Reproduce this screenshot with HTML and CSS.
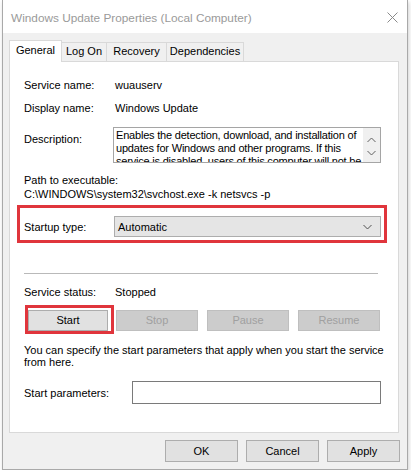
FILE: index.html
```html
<!DOCTYPE html>
<html>
<head>
<meta charset="utf-8">
<link rel="stylesheet" href="styles.css">
</head>
<body>
<div class="window">
  <div class="titlebar">
    <span class="title">Windows Update Properties (Local Computer)</span>
    <svg class="close" width="11" height="11" viewBox="0 0 11 11"><path d="M0.5 0.5 L10.5 10.5 M10.5 0.5 L0.5 10.5" stroke="#8a8a8a" stroke-width="1" fill="none"/></svg>
  </div>
  <div class="client">
    <div class="tabs">
      <div class="tab active t-general">General</div>
      <div class="tab t-logon">Log On</div>
      <div class="tab t-recovery">Recovery</div>
      <div class="tab t-deps">Dependencies</div>
    </div>
    <div class="panel">
      <div class="row first"><span class="label">Service name:</span><span class="value">wuauserv</span></div>
      <div class="row second"><span class="label">Display name:</span><span class="value">Windows Update</span></div>
      <div class="desc-row">
        <span class="label desc-label">Description:</span>
        <div class="desc-box">
          <div class="desc-text">Enables the detection, download, and installation of updates for Windows and other programs. If this service is disabled, users of this computer will not be able to use Windows Update or its automatic updating feature.</div>
          <div class="scroll">
            <svg width="9" height="6" viewBox="0 0 9 6"><path d="M0.5 5 L4.5 1 L8.5 5" stroke="#606060" fill="none"/></svg>
            <svg width="9" height="6" viewBox="0 0 9 6"><path d="M0.5 1 L4.5 5 L8.5 1" stroke="#606060" fill="none"/></svg>
          </div>
        </div>
      </div>
      <div class="line path-label">Path to executable:</div>
      <div class="line">C:\WINDOWS\system32\svchost.exe -k netsvcs -p</div>
      <div class="highlight startup">
        <span class="label startup-label">Startup type:</span>
        <div class="combo"><span>Automatic</span>
          <svg width="9" height="6" viewBox="0 0 9 6"><path d="M0.5 1 L4.5 5 L8.5 1" stroke="#505050" fill="none"/></svg>
        </div>
      </div>
      <div class="separator"></div>
      <div class="row status"><span class="label">Service status:</span><span class="value">Stopped</span></div>
      <div class="svc-buttons">
        <div class="highlight start-wrap"><div class="btn start">Start</div></div>
        <div class="btn disabled">Stop</div>
        <div class="btn disabled">Pause</div>
        <div class="btn disabled">Resume</div>
      </div>
      <p class="hint">You can specify the start parameters that apply when you start the service from here.</p>
      <div class="params">
        <span class="label params-label">Start parameters:</span>
        <div class="input"></div>
      </div>
    </div>
    <div class="dialog-buttons">
      <div class="btn dlg">OK</div>
      <div class="btn dlg">Cancel</div>
      <div class="btn dlg">Apply</div>
    </div>
  </div>
</div>
</body>
</html>
```
FILE: styles.css
```css
* { box-sizing: border-box; }
html, body { margin: 0; padding: 0; background: #ffffff; }
body {
  font-family: "Liberation Sans", Arial, sans-serif;
  font-size: 11px;
  color: #000;
}
.window {
  margin-left: 2px;
  width: 406px;
  height: 470px;
  border: 1px solid #a9a9a9;
  border-top: none;
  box-shadow: 1px 2px 4px rgba(0,0,0,0.18);
  background: #f0f0f0;
}
.titlebar {
  height: 33px;
  background: #fff;
  display: flex;
  align-items: center;
  justify-content: space-between;
  padding: 0 9px 0 8px;
}
.title {
  font-size: 11.8px;
  color: #9a9a9a;
  margin-top: 2px;
}
.close { margin-top: 2px; }
.client { padding-top: 7px; }
.tabs {
  display: flex;
  align-items: flex-end;
  height: 21px;
  margin-left: 6px;
}
.tab {
  height: 19px;
  line-height: 17px;
  text-align: center;
  border: 1px solid #d9d9d9;
  border-bottom: none;
  border-left: none;
  background: #f0f0f0;
}
.tab.active {
  height: 22px;
  margin-bottom: -1px;
  line-height: 19px;
  background: #fff;
  border-left: 1px solid #d9d9d9;
  position: relative;
  z-index: 1;
}
.t-general { width: 53px; }
.t-logon { width: 45px; }
.t-recovery { width: 60px; }
.t-deps { width: 77px; }
.panel {
  margin-left: 6px;
  width: 390px;
  height: 372px;
  background: #fff;
  border: 1px solid #d9d9d9;
  padding-left: 14px;
}
.row { display: flex; height: 14px; line-height: 14px; }
.row.first { margin-top: 16px; }
.row.second { margin-top: 9px; }
.label { display: inline-block; width: 91px; flex-shrink: 0; }
.desc-row { display: flex; margin-top: 12px; }
.desc-label { width: 89px; padding-top: 5px; line-height: 14px; }
.desc-box {
  width: 268px;
  height: 36px;
  border: 1px solid #a5a5a5;
  display: flex;
  overflow: hidden;
}
.desc-text {
  flex: 1;
  padding: 1px 0 0 2px;
  line-height: 13px;
  letter-spacing: -0.2px;
}
.scroll {
  width: 17px;
  flex-shrink: 0;
  background: #f0f0f0;
  display: flex;
  flex-direction: column;
  align-items: center;
  justify-content: space-around;
  padding: 5px 0 3px;
}
.line { height: 14px; line-height: 14px; }
.path-label { margin-top: 10px; }
.highlight { border: 3px solid #e0353c; }
.startup {
  margin: 4px 0 0 -7px;
  width: 370px;
  height: 38px;
  padding: 8px 2px 3px 4px;
  display: flex;
  align-items: center;
}
.startup-label { width: 90px; }
.combo {
  width: 267px;
  height: 21px;
  background: #e5e5e5;
  border: 1px solid #adadad;
  display: flex;
  align-items: center;
  justify-content: space-between;
  padding: 0 8px 0 3px;
}
.separator {
  margin-top: 30px;
  width: 354px;
  border-top: 1px solid #b9b9b9;
}
.row.status { margin-top: 11px; }
.svc-buttons {
  display: flex;
  align-items: flex-start;
  margin-top: 6px;
}
.start-wrap {
  margin-left: 1px;
  padding: 2px 3px 0 0;
}
.btn {
  height: 21px;
  line-height: 19px;
  text-align: center;
  background: #e1e1e1;
  border: 1px solid #adadad;
}
.btn.start { width: 80px; }
.btn.disabled {
  width: 82px;
  margin-top: 5px;
  margin-left: 9px;
  background: #cccccc;
  border-color: #bfbfbf;
  color: #a0a0a0;
}
.svc-buttons .start-wrap + .btn.disabled { margin-left: 2px; }
.hint {
  margin: 10px 0 0;
  line-height: 12px;
  width: 360px;
}
.params {
  display: flex;
  align-items: center;
  margin-top: 13px;
}
.params-label { width: 108px; }
.input {
  width: 249px;
  height: 23px;
  border: 1px solid #7a7a7a;
  background: #fff;
}
.dialog-buttons {
  display: flex;
  justify-content: flex-end;
  gap: 8px;
  margin-top: 7px;
  padding-right: 7px;
}
.btn.dlg { width: 73px; height: 22px; line-height: 20px; }
```
